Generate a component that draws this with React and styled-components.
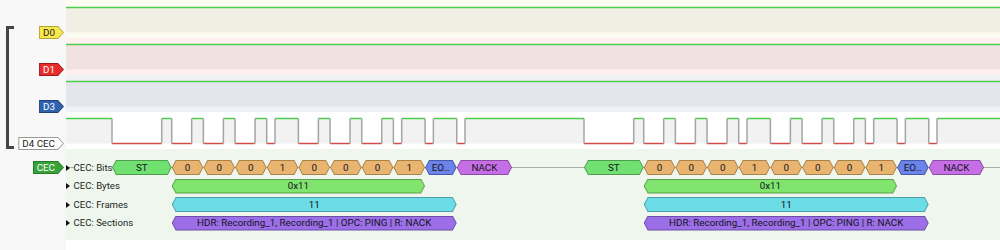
import React from "react";
import styled, { createGlobalStyle } from "styled-components";

const GlobalStyle = createGlobalStyle`
  html, body { margin: 0; padding: 0; background: #ffffff; }
  body { font-family: Roboto, "Noto Sans", "DejaVu Sans", sans-serif; }
`;

const PANEL = 66;
const TW = 934;
const BIT = 31.67;
const BITS = [0, 0, 0, 1, 0, 0, 0, 1, 1, 1];
const FRAMES = [112, 584];

const COLORS = {
  start: { fill: "#70e070", border: "#4e9c4e" },
  bit: { fill: "#e9b46f", border: "#a8834a" },
  eom: { fill: "#6c83e9", border: "#4759a8" },
  nack: { fill: "#c66ee6", border: "#8a4ba3" },
  byte: { fill: "#80e46f", border: "#58a04a" },
  frame: { fill: "#6cdce6", border: "#4a9ea6" },
  section: { fill: "#9c6fe8", border: "#6c4ca6" },
};

/* ---------- layout ---------- */

const Page = styled.div`
  width: 1000px;
  height: 250px;
  overflow: hidden;
  display: flex;
  flex-direction: column;
  background: linear-gradient(to right, #f8f8f8 ${PANEL}px, #ffffff ${PANEL}px);
`;

const Group = styled.div`
  display: flex;
  padding-left: 6px;
`;

const Bracket = styled.div`
  width: 5px;
  margin-top: 26px;
  border: 3px solid #454545;
  border-right: none;
`;

const Rows = styled.div`
  display: flex;
  flex-direction: column;
`;

const Row = styled.div`
  display: flex;
  height: ${(p) => p.$h}px;
`;

const LabelCell = styled.div`
  width: ${(p) => p.$w}px;
  box-sizing: border-box;
  display: flex;
  justify-content: flex-end;
  align-items: flex-start;
  padding-top: ${(p) => p.$top}px;
  padding-right: 2px;
`;

const TraceCell = styled.div`
  width: ${TW}px;
  height: 100%;
  background: ${(p) => p.$bg};
  svg { display: block; }
`;

/* ---------- channel labels ---------- */

const LabelOuter = styled.div`
  display: inline-flex;
  height: 13px;
  padding: 1px;
  box-sizing: border-box;
  background: ${(p) => p.$border};
  clip-path: polygon(0 0, calc(100% - 6px) 0, 100% 50%, calc(100% - 6px) 100%, 0 100%);
`;

const LabelInner = styled.span`
  display: flex;
  align-items: center;
  height: 100%;
  padding: 0 8px 0 3px;
  background: ${(p) => p.$fill};
  color: ${(p) => p.$ink};
  font-size: 9.8px;
  line-height: 1;
  white-space: nowrap;
  clip-path: polygon(0 0, calc(100% - 5.3px) 0, 100% 50%, calc(100% - 5.3px) 100%, 0 100%);
`;

const ChannelLabel = ({ text, fill, border, ink }) => (
  <LabelOuter $border={border}>
    <LabelInner $fill={fill} $ink={ink}>{text}</LabelInner>
  </LabelOuter>
);

/* ---------- decoder ---------- */

const DecoderBlock = styled.div`
  display: flex;
  height: 91px;
`;

const DecodeArea = styled.div`
  width: ${TW}px;
  height: 100%;
  box-sizing: border-box;
  padding-top: 9.25px;
  background: #eef6ed;
  display: flex;
  flex-direction: column;
`;

const DecodeRow = styled.div`
  position: relative;
  height: 18.5px;
  display: flex;
  align-items: center;
  &::before {
    content: "";
    display: ${(p) => (p.$line ? "block" : "none")};
    position: absolute;
    left: 0;
    right: 0;
    top: 50%;
    height: 1px;
    margin-top: -0.5px;
    background: #a9aea9;
  }
`;

const RowTitle = styled.div`
  position: relative;
  z-index: 1;
  display: flex;
  align-items: center;
  gap: 3.5px;
`;

const Triangle = styled.span`
  width: 0;
  height: 0;
  border-left: 4px solid #111;
  border-top: 3.5px solid transparent;
  border-bottom: 3.5px solid transparent;
`;

const TitleText = styled.span`
  background: #eef6ed;
  padding-right: 1px;
  color: #1e1e1e;
  font-size: 9.6px;
  line-height: 12px;
  white-space: nowrap;
`;

const Ann = styled.div`
  position: absolute;
  z-index: 2;
  top: 50%;
  height: 15px;
  margin-top: -7.5px;
  padding: 1px;
  box-sizing: border-box;
  background: ${(p) => p.$border};
  clip-path: polygon(4px 0, calc(100% - 4px) 0, 100% 50%, calc(100% - 4px) 100%, 4px 100%, 0 50%);
`;

const AnnFill = styled.div`
  height: 100%;
  background: ${(p) => p.$fill};
  clip-path: polygon(3.5px 0, calc(100% - 3.5px) 0, 100% 50%, calc(100% - 3.5px) 100%, 3.5px 100%, 0 50%);
  display: flex;
  align-items: center;
  justify-content: center;
  overflow: hidden;
  white-space: nowrap;
  color: #141420;
  font-size: 9.8px;
  line-height: 1;
`;

/* ---------- data ---------- */

function frameEdges(s) {
  const e = [
    [s, 0],
    [s + 49.7, 1],
  ];
  BITS.forEach((b, k) => {
    const x = s + 59.7 + BIT * k;
    e.push([x, 0], [x + (b ? 8.3 : 20), 1]);
  });
  return e;
}

function buildAnns() {
  const rows = { bits: [], bytes: [], frames: [], sections: [] };
  FRAMES.forEach((s) => {
    const b0 = s + 59.7;
    const bx = (k) => b0 + BIT * k;
    rows.bits.push({ x0: s, x1: b0, text: "ST", kind: "start" });
    BITS.slice(0, 8).forEach((b, k) =>
      rows.bits.push({ x0: bx(k), x1: bx(k + 1), text: String(b), kind: "bit" })
    );
    rows.bits.push({ x0: bx(8), x1: bx(9), text: "EO…", kind: "eom" });
    rows.bits.push({ x0: bx(9), x1: bx(9) + 55.3, text: "NACK", kind: "nack" });
    rows.bytes.push({ x0: bx(0), x1: bx(8), text: "0x11", kind: "byte" });
    rows.frames.push({ x0: bx(0), x1: bx(9), text: "11", kind: "frame" });
    rows.sections.push({
      x0: bx(0),
      x1: bx(9),
      text: "HDR: Recording_1, Recording_1 | OPC: PING | R: NACK",
      kind: "section",
    });
  });
  return rows;
}

const ANNS = buildAnns();

/* ---------- traces ---------- */

const HI = "#4ccd4c";
const LO = "#d24c4c";
const EDGE = "#a4a4a4";

const ConstantHigh = ({ h, hi, lo, fill }) => (
  <svg width={TW} height={h}>
    <rect x="0" y={hi + 0.5} width={TW} height={lo - hi - 0.5} fill={fill} />
    <line x1="0" x2={TW} y1={hi} y2={hi} stroke={HI} strokeWidth="1.5" />
  </svg>
);

const PulseTrace = ({ h, hi, lo, fill }) => {
  const edges = FRAMES.flatMap(frameEdges).map(([x, v]) => [x - PANEL, v]);
  const segs = [];
  let x = 0;
  let level = 1;
  edges.forEach(([ex, v]) => {
    segs.push({ a: x, b: ex, level });
    x = ex;
    level = v;
  });
  segs.push({ a: x, b: TW, level });
  return (
    <svg width={TW} height={h}>
      {segs
        .filter((s) => s.level)
        .map((s, i) => (
          <rect key={"f" + i} x={s.a} y={hi + 0.5} width={s.b - s.a} height={lo - hi - 0.5} fill={fill} />
        ))}
      {segs.map((s, i) => (
        <line
          key={"s" + i}
          x1={s.a}
          x2={s.b}
          y1={s.level ? hi : lo}
          y2={s.level ? hi : lo}
          stroke={s.level ? HI : LO}
          strokeWidth="1.5"
        />
      ))}
      {edges.map(([ex], i) => (
        <line key={"e" + i} x1={ex} x2={ex} y1={hi} y2={lo} stroke={EDGE} strokeWidth="1.5" />
      ))}
    </svg>
  );
};

const CHANNELS = [
  { name: "D0", h: 38, top: 26, hi: 7.5, lo: 32.5, bg: "#fdfcf1", fill: "#f1efe3", label: { fill: "#fae94c", border: "#b3a43a", ink: "#222" } },
  { name: "D1", h: 37, top: 25, hi: 6.5, lo: 31.5, bg: "#fff0f0", fill: "#f1e1e1", label: { fill: "#e82c2c", border: "#a31818", ink: "#ffffff" } },
  { name: "D3", h: 37, top: 25, hi: 6.5, lo: 31.5, bg: "#eff2f7", fill: "#e3e7ed", label: { fill: "#2f62ae", border: "#1f4178", ink: "#ffffff" } },
  { name: "D4 CEC", h: 37, top: 25, hi: 6.5, lo: 31.5, bg: "#ffffff", fill: "#f2f2f2", label: { fill: "#ffffff", border: "#9a9a9a", ink: "#222" }, pulses: true },
];

const DECODE_ROWS = [
  { key: "bits", title: "CEC: Bits", line: true },
  { key: "bytes", title: "CEC: Bytes" },
  { key: "frames", title: "CEC: Frames" },
  { key: "sections", title: "CEC: Sections" },
];

export default function App() {
  return (
    <>
      <GlobalStyle />
      <Page>
        <Group>
          <Bracket />
          <Rows>
            {CHANNELS.map((c) => (
              <Row key={c.name} $h={c.h}>
                <LabelCell $w={52} $top={c.top}>
                  <ChannelLabel text={c.name} {...c.label} />
                </LabelCell>
                <TraceCell $bg={c.bg}>
                  {c.pulses ? (
                    <PulseTrace h={c.h} hi={c.hi} lo={c.lo} fill={c.fill} />
                  ) : (
                    <ConstantHigh h={c.h} hi={c.hi} lo={c.lo} fill={c.fill} />
                  )}
                </TraceCell>
              </Row>
            ))}
          </Rows>
        </Group>
        <DecoderBlock>
          <LabelCell $w={PANEL} $top={12}>
            <ChannelLabel text="CEC" fill="#37a337" border="#287a28" ink="#ffffff" />
          </LabelCell>
          <DecodeArea>
            {DECODE_ROWS.map((r) => (
              <DecodeRow key={r.key} $line={r.line}>
                <RowTitle>
                  <Triangle />
                  <TitleText>{r.title}</TitleText>
                </RowTitle>
                {ANNS[r.key].map((a, i) => (
                  <Ann
                    key={i}
                    $border={COLORS[a.kind].border}
                    style={{ left: a.x0 - PANEL, width: a.x1 - a.x0 }}
                  >
                    <AnnFill $fill={COLORS[a.kind].fill}>{a.text}</AnnFill>
                  </Ann>
                ))}
              </DecodeRow>
            ))}
          </DecodeArea>
        </DecoderBlock>
      </Page>
    </>
  );
}
